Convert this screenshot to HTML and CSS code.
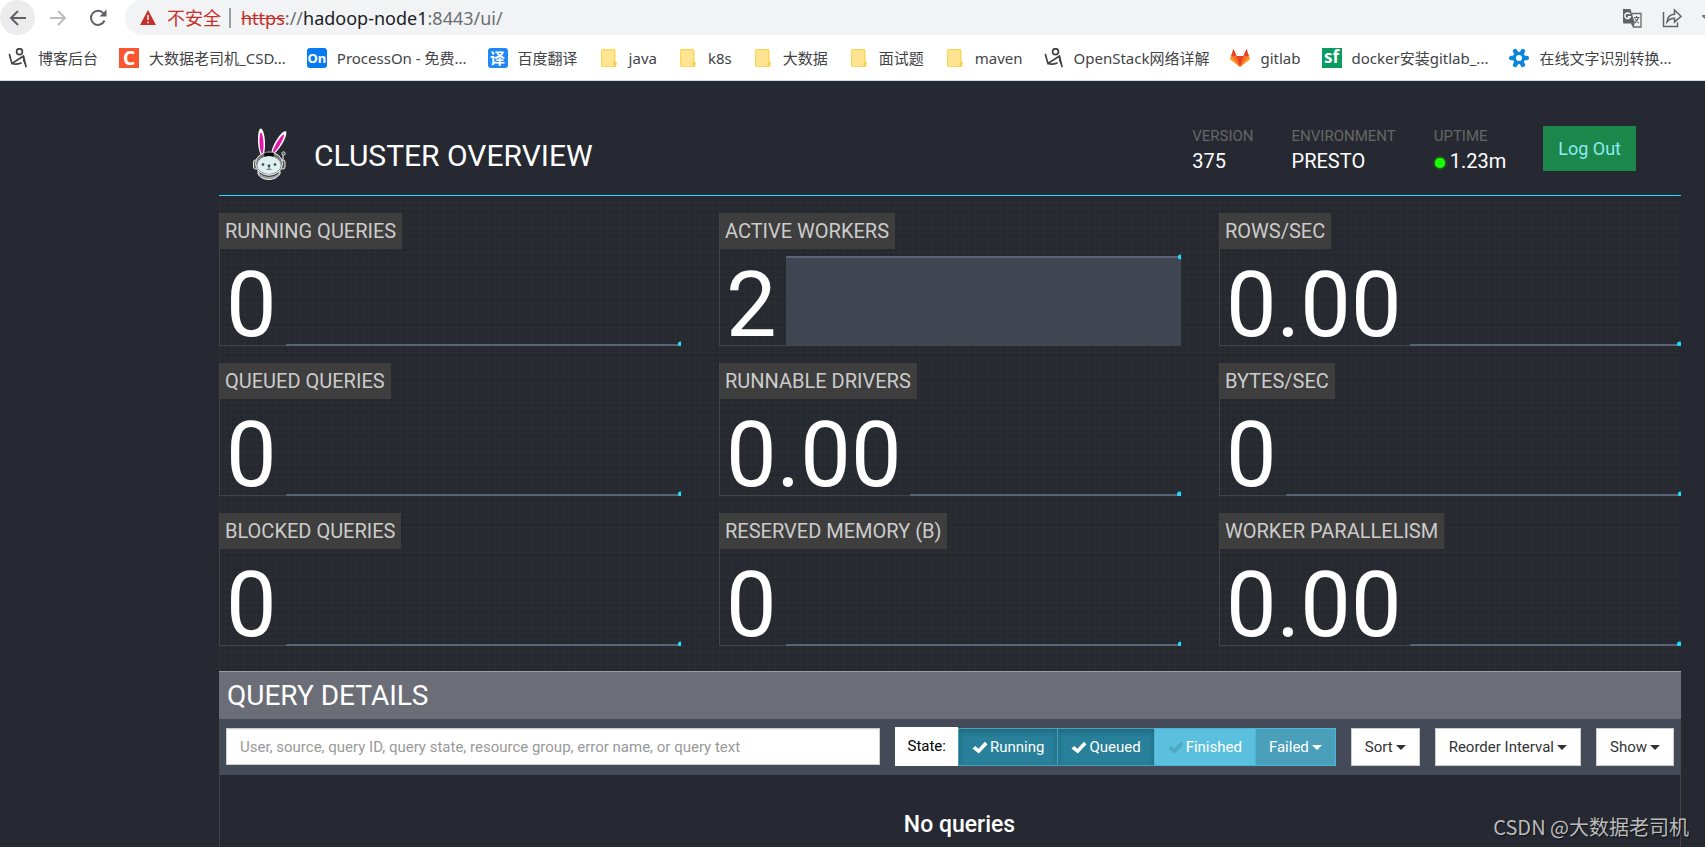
FILE: index.html
```html
<!DOCTYPE html>
<html lang="zh-CN">
<head>
<meta charset="utf-8">
<title>Cluster Overview - Trino</title>
<link rel="stylesheet" href="styles.css">
</head>
<body>
<svg class="defs" aria-hidden="true">
  <symbol id="folder" viewBox="0 0 20 20">
    <path d="M2 2.5Q2 1 3.500 1H15Q16.500 1 16.500 2.500V13.500Q18 13.500 17.800 15.500L17 19H3.500Q2 19 2 17.500Z" fill="#fbd65c"/>
    <path d="M3 2.500H15V18H3.500Z" fill="#ffe591"/>
    <path d="M14.500 18.500V14.500Q15.500 12.800 16.800 14.500V17Z" fill="#f6cc4a"/>
  </symbol>
  <symbol id="figure" viewBox="0 0 20 20">
    <g fill="none" stroke="#444" stroke-width="1.700" stroke-linecap="round">
      <circle cx="11.500" cy="3.700" r="2.900"/>
      <path d="M1.500 6.500Q2.500 11 4 15.500L15.500 8M15.500 8Q16.500 13 18 18.500M4 15.500Q8 17 13 15"/>
    </g>
    <path d="M15.500 6.500L18.500 19.500L15 13Z" fill="#444"/>
  </symbol>
  <symbol id="ok" viewBox="0 0 16 13">
    <path d="M0.500 7.500L3.200 5L6.500 7.800L12.800 0.800L15.600 3.200L6.800 12.500Z" fill="currentColor"/>
  </symbol>
</svg>

<header class="chrome">
  <div class="toolbar">
    <button class="nav nav-back" aria-label="Back"><svg viewBox="0 0 18 18"><path d="M17 9H2M9 2L2 9L9 16"/></svg></button>
    <button class="nav nav-forward" aria-label="Forward"><svg viewBox="0 0 18 18"><path d="M1 9H16M9 2L16 9L9 16"/></svg></button>
    <button class="nav" aria-label="Reload"><svg viewBox="0 0 18 18"><path d="M15.500 11.500A7 7 0 1 1 14.500 4.500"/><path class="solid" d="M17.500 0.500V7.500H10.500Z"/></svg></button>
    <div class="address">
      <svg class="warn" viewBox="0 0 16 15"><path d="M8 0L16 15H0Z" fill="#c5302a"/><path d="M8 5V10M8 11.500V13.200" stroke="#f1f3f4" stroke-width="1.600"/></svg>
      <span class="unsafe">不安全</span>
      <span class="divider"></span>
      <span class="url"><s>https</s>://<b>hadoop-node1</b>:8443/ui/</span>
      <div class="actions">
        <svg viewBox="0 0 20 20"><path d="M10 5.500H19V19H11.500L10 15" fill="none" stroke="#666a6e" stroke-width="1.300"/><path d="M1 1H8.500L13 15.500H2Q1 15.500 1 14Z" fill="#5f6368"/><path d="M8.800 15.500H13L11 19Z" fill="#5f6368"/><path d="M8 6.200A2.800 2.800 0 1 0 8.300 8.700H5.800" fill="none" stroke="#fff" stroke-width="1.400"/><path d="M12 9.500H17.500M14.600 8V9.500M16.500 9.500Q15.500 13 12.700 15M13 10.500Q14.500 13.500 17 15" fill="none" stroke="#5f6368" stroke-width="1.100"/></svg>
        <svg viewBox="0 0 20 20"><path d="M1.500 4V18.500H15.500V14.500M5 14Q5.500 6.500 12.500 6.200V2L19 8.300L12.500 14V10.200Q8 10 5 14Z" fill="none" stroke="#5f6368" stroke-width="1.500"/></svg>
        <svg viewBox="0 0 20 20"><path d="M10 1.500L12.500 7.500L19 8L14 12.300L15.600 18.500L10 15.200L4.400 18.500L6 12.300L1 8L7.500 7.500Z" fill="none" stroke="#5f6368" stroke-width="1.500"/></svg>
      </div>
    </div>
  </div>
  <nav class="bookmarks">
    <a href="#"><svg><use href="#figure"/></svg>博客后台</a>
    <a href="#"><span class="tile tile-c">C</span>大数据老司机_CSD...</a>
    <a href="#"><span class="tile tile-on">On</span>ProcessOn - 免费...</a>
    <a href="#"><span class="tile tile-fy">译</span>百度翻译</a>
    <a href="#"><svg><use href="#folder"/></svg>java</a>
    <a href="#"><svg><use href="#folder"/></svg>k8s</a>
    <a href="#"><svg><use href="#folder"/></svg>大数据</a>
    <a href="#"><svg><use href="#folder"/></svg>面试题</a>
    <a href="#"><svg><use href="#folder"/></svg>maven</a>
    <a href="#"><svg><use href="#figure"/></svg>OpenStack网络详解</a>
    <a href="#"><svg viewBox="0 0 20 20"><path d="M0 11L3.500 1L6.500 8H13.500L16.500 1L20 11L10 19Z" fill="#fc6d26"/><path d="M3.500 1L6.500 8H1.200ZM16.500 1L13.500 8H18.800Z" fill="#e24329"/><path d="M6.500 8H13.500L10 19Z" fill="#e24329"/><path d="M0 11L1.200 8L10 19ZM20 11L18.800 8L10 19Z" fill="#fca326"/></svg>gitlab</a>
    <a href="#"><span class="tile tile-sf">sf</span>docker安装gitlab_...</a>
    <a href="#"><svg viewBox="0 0 20 20"><g stroke="#0b87dc" stroke-width="4.500" stroke-linecap="round"><path d="M2.200 10H17.800M6.100 3.200L13.900 16.800M13.900 3.200L6.100 16.800"/></g><circle cx="10" cy="10" r="6.300" fill="#0b87dc"/><circle cx="10" cy="10" r="3" fill="#fff"/></svg>在线文字识别转换...</a>
  </nav>
</header>

<main class="page">
  <header class="cluster">
    <svg class="bunny" viewBox="0 0 36 52">
      <g fill="#fff"><ellipse cx="9.500" cy="14" rx="3.500" ry="13.500" transform="rotate(-3 9.500 14)"/><ellipse cx="27" cy="14.500" rx="3.500" ry="13" transform="rotate(31 27 14.500)"/></g>
      <g fill="#e815ac"><ellipse cx="9.500" cy="15" rx="2" ry="10.500" transform="rotate(-3 9.500 15)"/><ellipse cx="26.500" cy="15.500" rx="1.900" ry="10.500" transform="rotate(31 26.500 15.500)"/></g>
      <path d="M6 42H28V46Q24 51.500 17 51.500Q9 51.500 6 46Z" fill="#9da0a2" stroke="#eee" stroke-width="1"/>
      <path d="M8 45Q17 52 26 45" fill="none" stroke="#444" stroke-width="1.200"/>
      <rect x="1.500" y="32" width="5" height="9" rx="2" fill="#555" stroke="#eee"/><rect x="28" y="32" width="5" height="9" rx="2" fill="#555" stroke="#eee"/>
      <path d="M31 33V27" stroke="#ccc" stroke-width="1.300"/><circle cx="31.500" cy="25.500" r="1.700" fill="#555" stroke="#ddd"/>
      <ellipse cx="17" cy="35.500" rx="13.500" ry="11.500" fill="#777" stroke="#eee" stroke-width="1"/>
      <path d="M12.500 24.500H21.500L22 30H12Z" fill="#080808"/>
      <ellipse cx="17" cy="37" rx="11.700" ry="9" fill="#ddefef"/>
      <g fill="#344"><circle cx="11" cy="36.500" r="1.300"/><circle cx="23" cy="36.500" r="1.300"/><circle cx="17" cy="38" r="1.400"/></g>
      <path d="M17 38V41M14.500 41.300H19.500" stroke="#566" stroke-width=".900"/>
    </svg>
    <h1>CLUSTER OVERVIEW</h1>
    <dl class="facts">
      <div><dt>VERSION</dt><dd>375</dd></div>
      <div><dt>ENVIRONMENT</dt><dd>PRESTO</dd></div>
      <div><dt>UPTIME</dt><dd><i class="light"></i>1.23m</dd></div>
    </dl>
    <button class="logout">Log Out</button>
  </header>

  <section class="metrics">
    <article><h2>RUNNING QUERIES</h2><div class="reading"><span>0</span><svg class="spark"><path d="M0 91H2000"/><circle cx="100%" cy="90" r="2.500"/></svg></div></article>
    <article><h2>ACTIVE WORKERS</h2><div class="reading"><span>2</span><svg class="spark"><rect y="3" width="100%" height="88"/><path d="M0 3H2000"/><circle cx="100%" cy="3" r="2.500"/></svg></div></article>
    <article><h2>ROWS/SEC</h2><div class="reading"><span>0.00</span><svg class="spark"><path d="M0 91H2000"/><circle cx="100%" cy="90" r="2.500"/></svg></div></article>
    <article><h2>QUEUED QUERIES</h2><div class="reading"><span>0</span><svg class="spark"><path d="M0 91H2000"/><circle cx="100%" cy="90" r="2.500"/></svg></div></article>
    <article><h2>RUNNABLE DRIVERS</h2><div class="reading"><span>0.00</span><svg class="spark"><path d="M0 91H2000"/><circle cx="100%" cy="90" r="2.500"/></svg></div></article>
    <article><h2>BYTES/SEC</h2><div class="reading"><span>0</span><svg class="spark"><path d="M0 91H2000"/><circle cx="100%" cy="90" r="2.500"/></svg></div></article>
    <article><h2>BLOCKED QUERIES</h2><div class="reading"><span>0</span><svg class="spark"><path d="M0 91H2000"/><circle cx="100%" cy="90" r="2.500"/></svg></div></article>
    <article><h2>RESERVED MEMORY (B)</h2><div class="reading"><span>0</span><svg class="spark"><path d="M0 91H2000"/><circle cx="100%" cy="90" r="2.500"/></svg></div></article>
    <article><h2>WORKER PARALLELISM</h2><div class="reading"><span>0.00</span><svg class="spark"><path d="M0 91H2000"/><circle cx="100%" cy="90" r="2.500"/></svg></div></article>
  </section>

  <section class="details">
    <h2>QUERY DETAILS</h2>
    <div class="filters">
      <input type="text" aria-label="Search queries" placeholder="User, source, query ID, query state, resource group, error name, or query text">
      <div class="states" role="group" aria-labelledby="state-label">
        <span class="state-label" id="state-label">State:</span>
        <button class="btn state on" aria-pressed="true"><svg class="ok"><use href="#ok"/></svg>Running</button>
        <button class="btn state on" aria-pressed="true"><svg class="ok"><use href="#ok"/></svg>Queued</button>
        <button class="btn state off" aria-pressed="false"><svg class="ok"><use href="#ok"/></svg>Finished</button>
        <button class="btn state mixed" aria-haspopup="true">Failed<i class="caret"></i></button>
      </div>
      <button class="btn" aria-haspopup="true">Sort<i class="caret"></i></button>
      <button class="btn" aria-haspopup="true">Reorder Interval<i class="caret"></i></button>
      <button class="btn" aria-haspopup="true">Show<i class="caret"></i></button>
    </div>
    <p class="empty">No queries</p>
  </section>
</main>
<div class="watermark">CSDN @大数据老司机</div>
</body>
</html>
```
FILE: styles.css
```css
* { box-sizing: border-box; }

body {
  margin: 0;
  min-height: 100vh;
  display: flex;
  flex-direction: column;
  background: #262931;
  color: #fff;
  font: 15px/20px Roboto, "Noto Sans CJK SC", sans-serif;
  overflow: hidden;
}

h1, h2, p, dl, dd { margin: 0; font-weight: 400; }
button, input { font: inherit; margin: 0; }
.defs { display: none; }

/* Browser chrome */
.chrome {
  background: #fff;
  border-bottom: 1px solid #cfdcdf;
  font-family: "Noto Sans", "Noto Sans CJK SC", sans-serif;
}
.toolbar { display: flex; height: 35px; gap: 5px; }
.nav {
  width: 35px;
  height: 35px;
  padding: 0;
  border: 0;
  border-radius: 50%;
  background: none;
  display: grid;
  place-items: center;
}
.nav svg { width: 18px; height: 18px; fill: none; stroke: #5f6368; stroke-width: 2; }
.nav .solid { fill: #5f6368; stroke: none; }
.nav-back { background: #ececed; }
.nav-forward svg { stroke: #babcbe; }
.address {
  flex: 1;
  display: flex;
  align-items: center;
  margin-left: 5px;
  padding-left: 15px;
  border-radius: 18px 0 0 18px;
  background: #f1f3f4;
  color: #6b6f74;
  font-size: 18px;
  min-width: 0;
}
.warn { width: 16px; height: 15px; }
.unsafe { margin: 0 8px 0 11px; color: #c5302a; }
.divider { width: 2px; height: 20px; background: #9b9ea1; margin-right: 10px; }
.url b { font-weight: 400; color: #202124; }
.url s { color: #c5302a; }
.actions { display: flex; gap: 20px; margin-left: auto; margin-right: -17px; }
.actions svg { width: 20px; height: 20px; }

.bookmarks {
  display: flex;
  align-items: center;
  gap: 21px;
  height: 45px;
  padding: 0 8px;
  white-space: nowrap;
}
.bookmarks a {
  display: flex;
  align-items: center;
  gap: 10px;
  color: #414346;
  text-decoration: none;
}
.bookmarks svg, .tile { width: 20px; height: 20px; flex: none; }
.tile { text-align: center; color: #fff; font-weight: 700; }
.tile-c { background: #fc5531; font-size: 19px; }
.tile-on { background: #067bef; border-radius: 3px; font-size: 13px; }
.tile-fy { background: #2088f5; border-radius: 3px; }
.tile-sf { background: #0a9a62; font-size: 17px; line-height: 18px; }

/* Page */
.page {
  flex: 1;
  display: flex;
  flex-direction: column;
  padding: 0 24px 0 219px;
}
.cluster {
  display: flex;
  align-items: flex-start;
  padding: 45px 45px 15px 33px;
  border-bottom: 1px solid #1edcff;
}
.bunny { width: 36px; height: 52px; margin-top: 2px; }
.cluster h1 { margin: 10px auto 0 26px; font-size: 30px; line-height: 40px; }
.facts { display: flex; gap: 38px; }
.facts dt { color: #666; }
.facts dd { font-size: 20px; line-height: 30px; }
.light {
  display: inline-block;
  width: 10px;
  height: 10px;
  margin: 0 5px 0 1px;
  border-radius: 50%;
  background: #19ff00;
  box-shadow: 0 0 3px #19ff00;
}
.logout {
  margin-left: 37px;
  padding: 0 15px;
  height: 45px;
  border: 0;
  background: #1b874b;
  color: #8eeaf0;
  font-size: 18px;
}

/* Metric tiles over a graph-paper grid */
.metrics {
  display: grid;
  grid-template-columns: repeat(3, minmax(0, 1fr));
  gap: 17px 38px;
  margin-top: 6px;
  padding: 11px 0 25px;
  background-image:
    linear-gradient(#2d302e 1px, transparent 1px 6px, #2b2e2f 6px 7px, transparent 7px 12px, #2b2e2f 12px 13px, transparent 13px 19px, #2b2e2f 19px 20px, transparent 20px),
    linear-gradient(90deg, #2d302e 1px, transparent 1px 6px, #2b2e2f 6px 7px, transparent 7px 12px, #2b2e2f 12px 13px, transparent 13px 19px, #2b2e2f 19px 20px, transparent 20px);
  background-size: 25px 25px;
}
.metrics article { border: solid #444; border-width: 0 0 1px 1px; }
.metrics h2 {
  width: fit-content;
  padding: 0 6px 0 5px;
  background: #3e3e3e;
  color: #ccc;
  font-size: 20px;
  line-height: 36px;
}
.reading { display: flex; align-items: flex-end; height: 96px; padding-left: 6px; }
.reading span { font-size: 90px; line-height: 78px; margin-right: 9px; }
.spark { flex: 1; min-width: 0; height: 92px; margin-bottom: -1px; }
.spark path { stroke: #5b6378; stroke-width: 2; }
.spark rect { fill: #404552; }
.spark circle { fill: #1edcff; transform: translateX(-1px); }

/* Query list */
.details {
  flex: 1;
  display: flex;
  flex-direction: column;
}
.details h2 {
  padding: 0 8px;
  border-top: 1px solid #9a9ea8;
  background: #6b6e77;
  font-size: 28px;
  line-height: 47px;
}
.filters {
  display: flex;
  gap: 15px;
  padding: 9px 6px;
  border: solid #484848;
  border-width: 0 1px;
  background: #454a58;
}
.filters input {
  flex: 1;
  min-width: 0;
  height: 37px;
  padding: 0 13px;
  border: 1px solid #ccc;
  box-shadow: inset 0 1px 1px #0001;
  color: #555;
}
.filters input::placeholder { color: #999; }
.states { display: flex; }
.state-label {
  margin-top: -1px;
  padding: 0 12px;
  background: #fff;
  color: #000;
  line-height: 38px;
}
.btn {
  display: flex;
  align-items: center;
  height: 38px;
  padding: 0 13px;
  border: 1px solid #ccc;
  border-radius: 0;
  background: #fff;
  color: #333;
}
.state { color: #fff; border-color: #46b8da; }
.state + .state { margin-left: -1px; }
.on { background: #28809a; border-color: #4a9fba; box-shadow: inset 0 3px 6px #0003; }
.off { background: #5bc0de; }
.off .ok { color: #4fa9c6; }
.mixed { background: #4a9fbb; }
.ok { width: 16px; height: 13px; margin-right: 2px; }
.caret {
  margin-left: 3px;
  border: 5px solid transparent;
  border-top-color: currentColor;
  border-bottom: 0;
}
.empty {
  flex: 1;
  padding: 37px 0 0 19px;
  border: solid #444;
  border-width: 0 1px;
  text-align: center;
  font-size: 23px;
  font-weight: 500;
  line-height: 26px;
}

.watermark {
  position: absolute;
  right: 16px;
  bottom: 6px;
  color: #babbbd;
  font: 20px/28px "Noto Sans CJK SC", sans-serif;
  text-shadow: 1px 1px 1px #0008;
}
```
